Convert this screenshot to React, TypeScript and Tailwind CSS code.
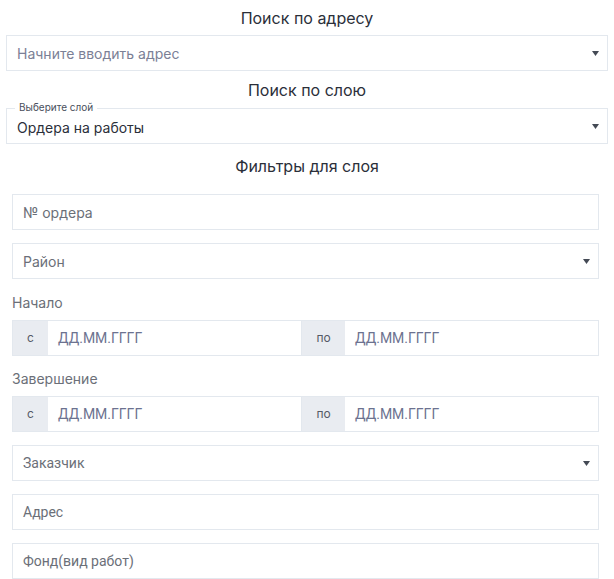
import React from "react";

const Caret = () => (
  <svg width="7" height="5" viewBox="0 0 7 5" className="shrink-0">
    <path d="M0 0 H7 L3.5 5 Z" fill="#444a55" />
  </svg>
);

const inter = { fontFamily: "Inter, 'Noto Sans', sans-serif" };
const roboto = { fontFamily: "Roboto, 'Noto Sans', sans-serif" };

export default function App() {
  return (
    <div className="w-[614px] h-[579px] bg-white overflow-hidden" style={inter}>
      <div className="px-[6px] pt-[8px]">
        <div className="text-center text-[16px] leading-[20px] text-[#2b2f3a]">Поиск по адресу</div>
        <div className="mt-[7px] h-[36px] border border-[#e3e8ee] flex items-center pl-[10px] pr-[8px]">
          <span className="flex-1 text-[14px] text-[#7b8096]">Начните вводить адрес</span>
          <Caret />
        </div>
        <div className="mt-[9px] text-center text-[16px] leading-[20px] text-[#2b2f3a]">Поиск по слою</div>
        <div className="relative mt-[8px] h-[36px] border border-[#e3e8ee] flex items-center pl-[10px] pr-[8px]">
          <span className="absolute left-[8px] top-[-8px] bg-white px-[4px] text-[10px] leading-[12px] text-[#4a4f5c]">Выберите слой</span>
          <span className="flex-1 text-[14px] pt-[2px] text-[#2b2f3a]">Ордера на работы</span>
          <Caret />
        </div>
        <div className="mt-[12px] text-center text-[16px] leading-[20px] text-[#2b2f3a]">Фильтры для слоя</div>
      </div>
      <div className="pl-[12px] pr-[15px] mt-[18px] flex flex-col">
        <div className="h-[36px] border border-[#e3e8ee] flex items-center px-[10px] text-[14px] text-[#6b6f78]">№ ордера</div>
        <div className="mt-[13px] h-[36px] border border-[#e3e8ee] flex items-center pl-[10px] pr-[8px] text-[14px] text-[#6b6f78]">
          <span className="flex-1">Район</span>
          <Caret />
        </div>
        <div className="mt-[14px] text-[14px] leading-[20px] text-[#6b6f78]">Начало</div>
        <DateRow />
        <div className="mt-[13px] text-[14px] leading-[20px] text-[#6b6f78]">Завершение</div>
        <DateRow />
        <div className="mt-[13px] h-[36px] border border-[#e3e8ee] flex items-center pl-[10px] pr-[8px] text-[14px] text-[#6b6f78]" style={roboto}>
          <span className="flex-1">Заказчик</span>
          <Caret />
        </div>
        <div className="mt-[13px] h-[36px] border border-[#e3e8ee] flex items-center px-[10px] text-[14px] text-[#6b6f78]" style={roboto}>Адрес</div>
        <div className="mt-[13px] h-[36px] border border-[#e3e8ee] flex items-center px-[10px] text-[14px] text-[#6b6f78]" style={roboto}>Фонд(вид работ)</div>
      </div>
    </div>
  );
}

function DateRow() {
  return (
    <div className="mt-[7px] h-[36px] flex border border-[#e3e8ee]">
      <div className="w-[35px] bg-[#e9ecf1] flex items-center justify-center text-[12px] text-[#555a66]">с</div>
      <div className="flex-1 flex items-center px-[10px] text-[14px] text-[#6c7290] border-r border-[#e3e8ee]" style={roboto}>ДД.ММ.ГГГГ</div>
      <div className="w-[43px] bg-[#e9ecf1] flex items-center justify-center text-[12px] text-[#555a66]">по</div>
      <div className="flex-1 flex items-center px-[10px] text-[14px] text-[#6c7290]" style={roboto}>ДД.ММ.ГГГГ</div>
    </div>
  );
}
